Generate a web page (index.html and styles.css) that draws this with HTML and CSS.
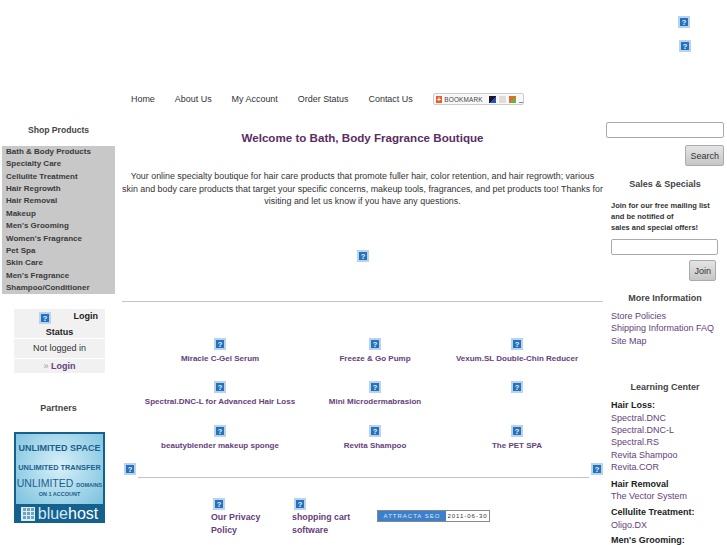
FILE: index.html
```html
<!DOCTYPE html>
<html lang="en">
<head>
  <meta charset="UTF-8" />
  <title>Bath, Body Fragrance Boutique</title>
  <link rel="stylesheet" href="styles.css">
</head>
<body>
  <svg class="defs">
    <symbol id="broken" viewBox="0 0 12 12">
      <rect width="12" height="12" fill="#b9d3ea"/>
      <rect x="2" y="2" width="8" height="8" fill="#2472bd"/>
      <text x="6" y="9" text-anchor="middle" font-family="Liberation Sans, sans-serif" font-size="7.5" font-weight="bold" fill="#eef5fb">?</text>
    </symbol>
  </svg>

  <div class="top">
    <svg class="ico"><use href="#broken"/></svg>
    <svg class="ico second"><use href="#broken"/></svg>
  </div>

  <div class="navbar">
    <a href="#">Home</a>
    <a href="#">About Us</a>
    <a href="#">My Account</a>
    <a href="#">Order Status</a>
    <a href="#">Contact Us</a>
    <div class="bookmark">
      <span class="bm-plus">+</span>
      <span class="bm-text">BOOKMARK</span>
      <span class="bm-dots"><i class="d1"></i><i class="d2"></i><i class="d3"></i><i class="d4"></i></span>
    </div>
  </div>

  <div class="columns">
    <div class="left">
      <h4>Shop Products</h4>
      <ul class="menu">
        <li>Bath &amp; Body Products</li>
        <li>Specialty Care</li>
        <li>Cellulite Treatment</li>
        <li>Hair Regrowth</li>
        <li>Hair Removal</li>
        <li>Makeup</li>
        <li>Men's Grooming</li>
        <li>Women's Fragrance</li>
        <li>Pet Spa</li>
        <li>Skin Care</li>
        <li>Men's Fragrance</li>
        <li>Shampoo/Conditioner</li>
      </ul>

      <div class="login">
        <div class="login-head">
          <div class="login-top"><svg class="ico"><use href="#broken"/></svg><b>Login</b></div>
          <b>Status</b>
        </div>
        <div class="login-row">Not logged in</div>
        <div class="login-link">» <a href="#">Login</a></div>
      </div>

      <h4 class="partners">Partners</h4>
      <div class="banner">
        <div class="banner-top">
          <div class="b1">UNLIMITED SPACE</div>
          <div class="b2">UNLIMITED TRANSFER</div>
          <div class="b3">UNLIMITED <small>DOMAINS</small></div>
          <div class="b4">ON 1 ACCOUNT</div>
        </div>
        <div class="banner-logo">
          <span class="grid-logo"></span><span>blue<b>host</b></span>
        </div>
      </div>
    </div>

    <div class="center">
      <h2>Welcome to Bath, Body Fragrance Boutique</h2>
      <p class="intro">Your online specialty boutique for hair care products that promote fuller hair, color retention, and hair regrowth; various<br>skin and body care products that target your specific concerns, makeup tools, fragrances, and pet products too! Thanks for<br>visiting and let us know if you have any questions.</p>
      <div class="mid-ico"><svg class="ico"><use href="#broken"/></svg></div>
      <hr>
      <div class="products">
        <div class="product"><svg class="ico"><use href="#broken"/></svg><a href="#">Miracle C-Gel Serum</a></div>
        <div class="product"><svg class="ico"><use href="#broken"/></svg><a href="#">Freeze &amp; Go Pump</a></div>
        <div class="product"><svg class="ico"><use href="#broken"/></svg><a href="#">Vexum.SL Double-Chin Reducer</a></div>
        <div class="product"><svg class="ico"><use href="#broken"/></svg><a href="#">Spectral.DNC-L for Advanced Hair Loss</a></div>
        <div class="product"><svg class="ico"><use href="#broken"/></svg><a href="#">Mini Microdermabrasion</a></div>
        <div class="product"><svg class="ico"><use href="#broken"/></svg></div>
        <div class="product"><svg class="ico"><use href="#broken"/></svg><a href="#">beautyblender makeup sponge</a></div>
        <div class="product"><svg class="ico"><use href="#broken"/></svg><a href="#">Revita Shampoo</a></div>
        <div class="product"><svg class="ico"><use href="#broken"/></svg><a href="#">The PET SPA</a></div>
      </div>
      <div class="rule-row">
        <svg class="ico"><use href="#broken"/></svg>
        <hr>
        <svg class="ico"><use href="#broken"/></svg>
      </div>
      <div class="foot">
        <div class="foot-item first"><svg class="ico"><use href="#broken"/></svg><a href="#">Our Privacy Policy</a></div>
        <div class="foot-item"><svg class="ico"><use href="#broken"/></svg><a href="#">shopping cart software</a></div>
        <div class="attracta"><span class="at-name">ATTRACTA SEO</span><span class="at-date">2011-06-30</span></div>
      </div>
    </div>

    <div class="right">
      <input type="text" class="search-box">
      <div class="btn-line"><button class="btn">Search</button></div>
      <h4 class="sales">Sales &amp; Specials</h4>
      <p class="join-text">Join for our free mailing list<br>and be notified of<br>sales and special offers!</p>
      <input type="text" class="join-box">
      <div class="btn-line join-line"><button class="btn">Join</button></div>

      <h4 class="more">More Information</h4>
      <ul class="links">
        <li><a href="#">Store Policies</a></li>
        <li><a href="#">Shipping Information FAQ</a></li>
        <li><a href="#">Site Map</a></li>
      </ul>

      <h4 class="learn">Learning Center</h4>
      <ul class="links">
        <li><b>Hair Loss:</b></li>
        <li><a href="#">Spectral.DNC</a></li>
        <li><a href="#">Spectral.DNC-L</a></li>
        <li><a href="#">Spectral.RS</a></li>
        <li><a href="#">Revita Shampoo</a></li>
        <li><a href="#">Revita.COR</a></li>
        <li class="group"><b>Hair Removal</b></li>
        <li><a href="#">The Vector System</a></li>
        <li class="group"><b>Cellulite Treatment:</b></li>
        <li><a href="#">Oligo.DX</a></li>
        <li class="group"><b>Men's Grooming:</b></li>
      </ul>
    </div>
  </div>
</body>
</html>
```

FILE: styles.css
```css
html, body {
  height: 545px;
  overflow: hidden;
}

body {
  margin: 0;
  background: white;
  font-family: "Liberation Sans", Arial, sans-serif;
  font-size: 9px;
  color: #333;
}

a {
  color: #65417a;
  text-decoration: none;
}

h4 {
  margin: 0;
  font-size: 9px;
  font-weight: bold;
  text-align: center;
  color: #444;
}

ul {
  list-style: none;
  margin: 0;
  padding: 0;
}

hr {
  border: none;
  border-top: 1px solid #c4c4c4;
  margin: 0;
}

.defs {
  display: none;
}

.ico {
  display: block;
  width: 12px;
  height: 12px;
  flex: none;
}

.top {
  height: 92px;
  padding: 16px 0 0 678px;
  box-sizing: border-box;
}

.top .second {
  margin: 12px 0 0 1px;
}

.navbar {
  display: flex;
  align-items: center;
  gap: 20px;
  height: 14px;
  padding-left: 131px;
  font-size: 8.95px;
}

.navbar a {
  color: #333;
}

.bookmark {
  display: flex;
  align-items: center;
  gap: 2px;
  width: 91px;
  height: 12px;
  box-sizing: border-box;
  padding-left: 2px;
  border: 1px solid #ccc;
  border-radius: 2px;
  background: #f8f8f8;
}

.bm-plus {
  width: 7px;
  height: 7px;
  background: #e8602c;
  color: white;
  font-size: 7px;
  line-height: 7px;
  text-align: center;
  font-weight: bold;
}

.bm-text {
  font-size: 6.4px;
  letter-spacing: 0.2px;
  color: #444;
  width: 45px;
}

.bm-dots {
  display: flex;
  gap: 3px;
}

.bm-dots i {
  display: block;
  width: 7px;
  height: 7px;
}

.d1 { background: linear-gradient(135deg, #1a1a1a 50%, #2a50c8 50%); }
.d2 { background: #ddd; }
.d3 { background: linear-gradient(135deg, #e06a30 50%, #6fae3f 50%); }
.bm-dots .d4 { width: 4px; height: 1px; margin-top: 6px; background: #888; }

.columns {
  display: grid;
  grid-template-columns: 120px 484px 118px;
  padding: 16px 0 0 2px;
}

.left {
  width: 113px;
}

.left h4 {
  padding-top: 3px;
  font-size: 8.6px;
}

.menu {
  margin-top: 11px;
  padding-left: 4px;
  background: #c8c8c8;
  height: 148px;
  box-sizing: border-box;
  font-weight: bold;
  color: #3a3a3a;
  font-size: 8px;
  line-height: 12.36px;
}

.login {
  width: 91px;
  margin: 15px 0 0 12px;
  text-align: center;
}

.login > div {
  background: #f1f1f1;
}

.login-head {
  height: 29px;
  margin-bottom: 1px;
  line-height: 14px;
  color: #222;
}

.login-top {
  display: flex;
  justify-content: space-between;
  padding: 3px 7px 0 25px;
  height: 13px;
}

.login-top b {
  line-height: 9px;
}

.login-row {
  height: 19px;
  line-height: 19px;
  margin-bottom: 1px;
}

.login-link {
  height: 14px;
  line-height: 14px;
  color: #999;
}

.login-link a {
  font-weight: bold;
}

.left .partners {
  margin-top: 27px;
  font-size: 9px;
}

.banner {
  width: 91px;
  height: 91px;
  margin: 19px 0 0 12px;
  background: #14618f;
  padding: 2px;
  box-sizing: border-box;
  color: #1c5f8c;
  text-align: center;
  overflow: hidden;
}

.banner-top {
  height: 70px;
  background: radial-gradient(circle at 50% 45%, #d8f0f9, #7bc2de);
  padding-top: 9px;
  box-sizing: border-box;
  white-space: nowrap;
  font-weight: bold;
}

.b1 {
  font-size: 9px;
  line-height: 11px;
}

.b2 {
  font-size: 7.4px;
  line-height: 9px;
  margin-top: 9px;
}

.b3 {
  font-size: 10.5px;
  line-height: 12px;
  font-weight: normal;
  margin-top: 5px;
}

.b3 small {
  font-size: 5.5px;
  font-weight: bold;
}

.b4 {
  font-size: 5.5px;
  line-height: 7px;
}

.banner-logo {
  display: flex;
  align-items: center;
  justify-content: center;
  gap: 3px;
  height: 19px;
  color: #d3e8f3;
  font-size: 16px;
}

.banner-logo b {
  font-weight: normal;
  color: white;
}

.grid-logo {
  width: 14px;
  height: 14px;
  border: 1px solid #dfeef6;
  box-sizing: border-box;
  background: repeating-linear-gradient(90deg, #dfeef6 0 1px, transparent 1px 4px),
    repeating-linear-gradient(0deg, #dfeef6 0 1px, #6fa3c2 1px 4px);
}

.center {
  padding-right: 3px;
}

.center h2 {
  margin: 0;
  padding-top: 9px;
  text-align: center;
  font-size: 11.6px;
  line-height: 14px;
  color: #5a2d63;
}

.intro {
  margin: 25px 0 0;
  text-align: center;
  line-height: 12.5px;
  font-size: 8.9px;
  white-space: nowrap;
}

.mid-ico {
  display: flex;
  justify-content: center;
  margin-top: 42px;
}

.mid-ico + hr {
  margin-top: 39px;
}

.products {
  display: grid;
  grid-template-columns: 196px 114px 170px;
  grid-auto-rows: 43.5px;
  margin-top: 36px;
}

.product {
  display: flex;
  flex-direction: column;
  align-items: center;
  gap: 3px;
  font-size: 8px;
  font-weight: bold;
  white-space: nowrap;
  line-height: 11px;
}

.rule-row {
  display: flex;
  align-items: flex-start;
  margin: -5px 0 0 2px;
  width: 479px;
  gap: 2px;
}

.rule-row hr {
  flex: 1;
  margin-top: 14px;
}

.foot {
  display: flex;
  align-items: flex-start;
  margin: 20px 0 0 89px;
}

.foot-item {
  width: 70px;
  margin-right: 11px;
  font-weight: bold;
  line-height: 12.5px;
}

.foot-item .ico {
  margin: 0 0 1px 2px;
}

.foot-item a {
  display: block;
  font-size: 8.8px;
}

.attracta {
  display: flex;
  width: 113px;
  height: 12px;
  margin: 12px 0 0 4px;
  border: 1px solid #888;
  box-sizing: border-box;
  font-size: 6px;
  line-height: 10px;
  letter-spacing: 1px;
  white-space: nowrap;
  overflow: hidden;
}

.at-name {
  width: 68px;
  background: #3a80cc;
  color: #dfeaf5;
  text-align: center;
}

.at-date {
  flex: 1;
  background: white;
  text-align: center;
}

.right input {
  display: block;
  box-sizing: border-box;
  border: 1px solid #aaa;
  border-radius: 2px;
  background: white;
  padding: 0;
}

.search-box {
  width: 118px;
  height: 16px;
}

.btn-line {
  display: flex;
  justify-content: flex-end;
  margin-top: 7px;
}

.btn {
  height: 21px;
  padding: 0 4px;
  border: 1px solid #aaa;
  border-radius: 2px;
  background: linear-gradient(#e4e4e4, #c6c6c6);
  font-family: inherit;
  font-size: 9px;
  color: #333;
}

.sales {
  margin-top: 13px;
}

.join-text {
  margin: 11px 0 0 5px;
  font-size: 7.5px;
  font-weight: bold;
  line-height: 11px;
}

.join-box {
  width: 107px;
  height: 16px;
  margin: 6px 0 0 5px;
}

.join-line {
  margin: 5px 8px 0 0;
}

.more {
  margin-top: 12px;
}

.links {
  margin: 7px 0 0 5px;
  line-height: 12.4px;
}

.links b {
  color: #222;
}

.learn {
  margin-top: 35px;
}

.group {
  margin-top: 4px;
}

.group:last-child {
  line-height: 10px;
}
```
